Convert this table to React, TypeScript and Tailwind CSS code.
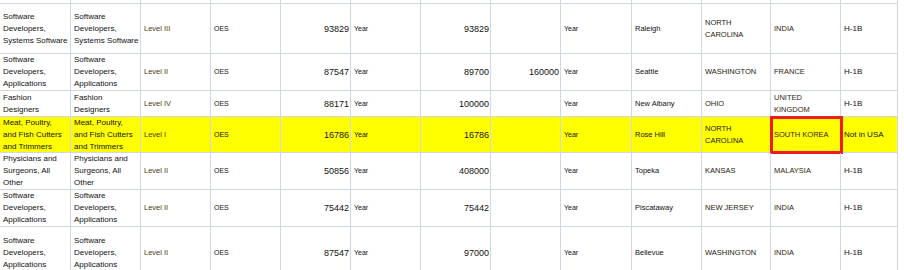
import React from 'react'

type Col = { w: string; cls: string; align: 'left' | 'right' }

// column widths include the 1px right grid line
const cols: Col[] = [
  { w: 'w-[71px]', cls: 'text-[8px]', align: 'left' },
  { w: 'w-[70px]', cls: 'text-[8px]', align: 'left' },
  { w: 'w-[70px]', cls: 'text-[7.5px] text-[#4d3a12]', align: 'left' },
  { w: 'w-[70px]', cls: 'text-[7px]', align: 'left' },
  { w: 'w-[70px]', cls: 'text-[9px]', align: 'right' },
  { w: 'w-[70px]', cls: 'text-[7px]', align: 'left' },
  { w: 'w-[70px]', cls: 'text-[9px]', align: 'right' },
  { w: 'w-[70px]', cls: 'text-[9px]', align: 'right' },
  { w: 'w-[71px]', cls: 'text-[7px]', align: 'left' },
  { w: 'w-[70px]', cls: 'text-[7.5px]', align: 'left' },
  { w: 'w-[69px]', cls: 'text-[7.5px] text-[#24200e]', align: 'left' },
  { w: 'w-[70px]', cls: 'text-[7.5px] text-[#33250c]', align: 'left' },
  { w: 'w-[57px]', cls: 'text-[8px]', align: 'left' },
]

const rows: { h: string; yellow?: boolean; cells: string[][] }[] = [
  {
    h: 'h-[50px]',
    cells: [
      ['Software', 'Developers,', 'Systems Software'],
      ['Software', 'Developers,', 'Systems Software'],
      ['Level III'], ['OES'], ['93829'], ['Year'], ['93829'], [], ['Year'],
      ['Raleigh'], ['NORTH', 'CAROLINA'], ['INDIA'], ['H-1B'],
    ],
  },
  {
    h: 'h-[37px]',
    cells: [
      ['Software', 'Developers,', 'Applications'],
      ['Software', 'Developers,', 'Applications'],
      ['Level II'], ['OES'], ['87547'], ['Year'], ['89700'], ['160000'], ['Year'],
      ['Seattle'], ['WASHINGTON'], ['FRANCE'], ['H-1B'],
    ],
  },
  {
    h: 'h-[26px]',
    cells: [
      ['Fashion', 'Designers'],
      ['Fashion', 'Designers'],
      ['Level IV'], ['OES'], ['88171'], ['Year'], ['100000'], [], ['Year'],
      ['New Albany'], ['OHIO'], ['UNITED', 'KINGDOM'], ['H-1B'],
    ],
  },
  {
    h: 'h-[36px]',
    yellow: true,
    cells: [
      ['Meat, Poultry,', 'and Fish Cutters', 'and Trimmers'],
      ['Meat, Poultry,', 'and Fish Cutters', 'and Trimmers'],
      ['Level I'], ['OES'], ['16786'], ['Year'], ['16786'], [], ['Year'],
      ['Rose Hill'], ['NORTH', 'CAROLINA'], ['SOUTH KOREA'], ['Not in USA'],
    ],
  },
  {
    h: 'h-[37px]',
    cells: [
      ['Physicians and', 'Surgeons, All', 'Other'],
      ['Physicians and', 'Surgeons, All', 'Other'],
      ['Level II'], ['OES'], ['50856'], ['Year'], ['408000'], [], ['Year'],
      ['Topeka'], ['KANSAS'], ['MALAYSIA'], ['H-1B'],
    ],
  },
  {
    h: 'h-[37px]',
    cells: [
      ['Software', 'Developers,', 'Applications'],
      ['Software', 'Developers,', 'Applications'],
      ['Level II'], ['OES'], ['75442'], ['Year'], ['75442'], [], ['Year'],
      ['Piscataway'], ['NEW JERSEY'], ['INDIA'], ['H-1B'],
    ],
  },
  {
    h: 'h-[53px]',
    cells: [
      ['Software', 'Developers,', 'Applications'],
      ['Software', 'Developers,', 'Applications'],
      ['Level II'], ['OES'], ['87547'], ['Year'], ['97000'], [], ['Year'],
      ['Bellevue'], ['WASHINGTON'], ['INDIA'], ['H-1B'],
    ],
  },
]

export default function App() {
  return (
    <div className="w-[904px] h-[270px] overflow-hidden bg-white font-['Liberation_Sans',Arial,sans-serif] text-[#111111]">
      <div className="w-[898px]">
        {/* tail of the row above, cut off by the window */}
        <div className="flex h-[4px] border-b border-[#d0d7e5]">
          {cols.map((c, i) => (
            <div key={i} className={`${c.w} shrink-0 border-r border-[#d0d7e5]`} />
          ))}
        </div>

        {rows.map((r, ri) => (
          <div key={ri} className={`flex ${r.h} border-b border-[#d0d7e5] ${r.yellow ? 'bg-[#ffff00]' : ''}`}>
            {cols.map((c, ci) => {
              const lines = r.cells[ci]
              const flagged = r.yellow && ci === 11
              return (
                <div
                  key={ci}
                  className={`relative ${c.w} shrink-0 border-r border-[#d0d7e5] flex flex-col justify-center leading-[12px] whitespace-nowrap ${c.cls} ${
                    c.align === 'right' ? 'items-end pr-[1px]' : 'items-start pl-[3px]'
                  }`}
                >
                  {lines.map((t, li) => (
                    <span key={li}>{t}</span>
                  ))}
                  {flagged && (
                    <div className="absolute -left-[1px] -top-[1px] w-[73px] h-[38px] border-[3px] border-[#ed1c24]" />
                  )}
                </div>
              )
            })}
          </div>
        ))}
      </div>
    </div>
  )
}
